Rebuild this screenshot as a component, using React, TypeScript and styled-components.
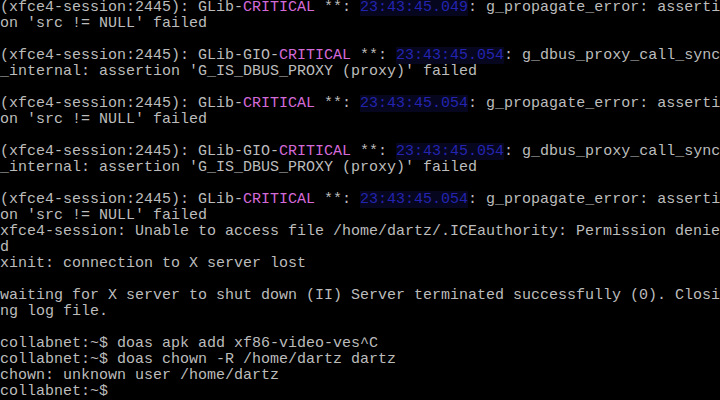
import React from 'react';
import styled, { createGlobalStyle } from 'styled-components';

const GlobalStyle = createGlobalStyle`
  html, body {
    margin: 0;
    padding: 0;
    background: #000;
  }
`;

type Seg = { t: string; k?: 'crit' | 'stamp' };

const glib = (stamp: string): Seg[] => [
  { t: '(xfce4-session:2445): GLib-' },
  { t: 'CRITICAL', k: 'crit' },
  { t: ' **: ' },
  { t: stamp, k: 'stamp' },
  { t: ': g_propagate_error: asserti' },
];

const gio = (stamp: string): Seg[] => [
  { t: '(xfce4-session:2445): GLib-GIO-' },
  { t: 'CRITICAL', k: 'crit' },
  { t: ' **: ' },
  { t: stamp, k: 'stamp' },
  { t: ': g_dbus_proxy_call_sync' },
];

const srcNull: Seg[] = [{ t: "on 'src != NULL' failed" }];
const proxy: Seg[] = [{ t: "_internal: assertion 'G_IS_DBUS_PROXY (proxy)' failed" }];
const blank: Seg[] = [];

const lines: Seg[][] = [
  glib('23:43:45.049'),
  srcNull,
  blank,
  gio('23:43:45.054'),
  proxy,
  blank,
  glib('23:43:45.054'),
  srcNull,
  blank,
  gio('23:43:45.054'),
  proxy,
  blank,
  glib('23:43:45.054'),
  srcNull,
  [{ t: 'xfce4-session: Unable to access file /home/dartz/.ICEauthority: Permission denie' }],
  [{ t: 'd' }],
  [{ t: 'xinit: connection to X server lost' }],
  blank,
  [{ t: 'waiting for X server to shut down (II) Server terminated successfully (0). Closi' }],
  [{ t: 'ng log file.' }],
  blank,
  [{ t: 'collabnet:~$ doas apk add xf86-video-ves^C' }],
  [{ t: 'collabnet:~$ doas chown -R /home/dartz dartz' }],
  [{ t: 'chown: unknown user /home/dartz' }],
  [{ t: 'collabnet:~$ ' }],
];

const Console = () => (
  <>
    <GlobalStyle />
    <Screen>
      {lines.map((line, i) => (
        <Line key={i}>
          {line.map((s, j) =>
            s.k === 'crit' ? (
              <Critical key={j}>{s.t}</Critical>
            ) : s.k === 'stamp' ? (
              <Stamp key={j}>{s.t}</Stamp>
            ) : (
              <span key={j}>{s.t}</span>
            )
          )}
        </Line>
      ))}
    </Screen>
  </>
);

const Screen = styled.div`
  width: 720px;
  height: 400px;
  overflow: hidden;
  background: #000;
  color: #bcbcbc;
  font-family: "Liberation Mono", "DejaVu Sans Mono", monospace;
  font-size: 15px;
  display: flex;
  flex-direction: column;
`;

const Line = styled.div`
  height: 16px;
  line-height: 16px;
  white-space: pre;
`;

const Critical = styled.span`
  color: #d46ad8;
`;

const Stamp = styled.span`
  color: #2424b0;
  background: #06061e;
`;

export default Console;
